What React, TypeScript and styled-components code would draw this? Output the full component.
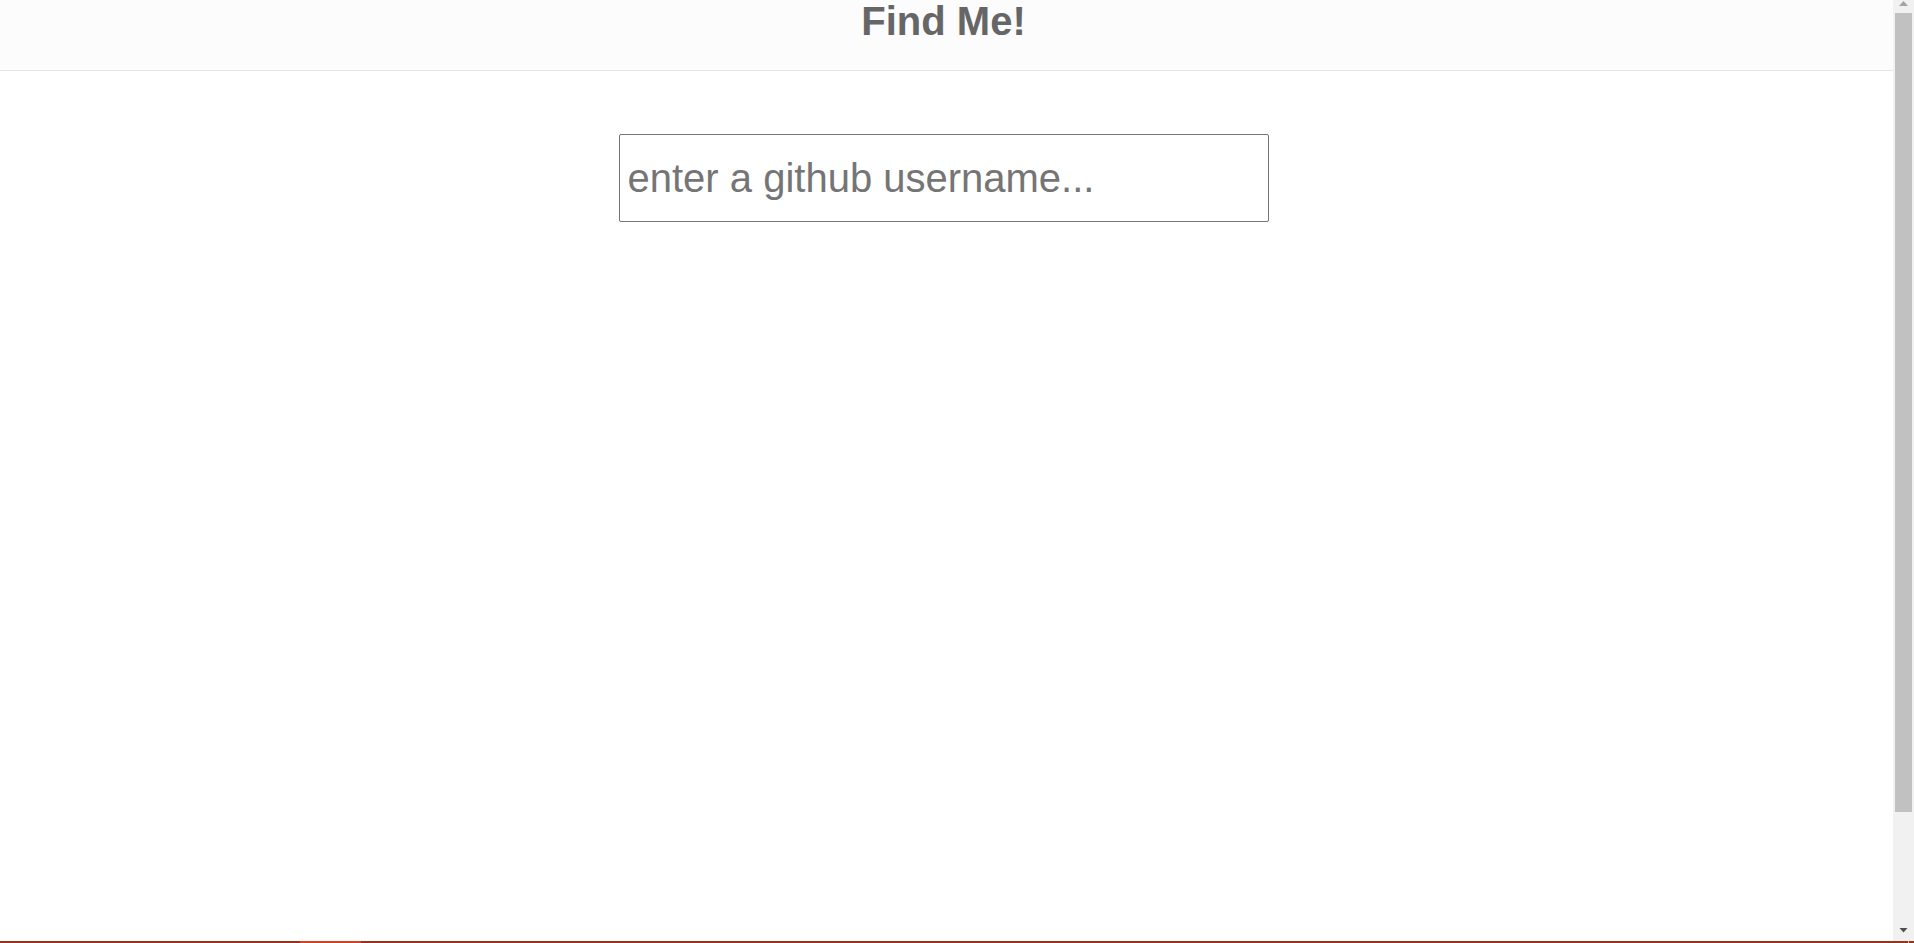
import React from "react";
import styled, { createGlobalStyle } from "styled-components";

const GlobalStyle = createGlobalStyle`
  html, body {
    margin: 0;
    padding: 0;
    height: 100%;
    overflow: hidden;
    background: #ffffff;
    font-family: "Liberation Sans", Arial, sans-serif;
  }
  #root {
    height: 100%;
  }
`;

const Frame = styled.div`
  display: flex;
  flex-direction: column;
  height: 100vh;
`;

const Window = styled.div`
  flex: 1;
  min-height: 0;
  display: flex;
  flex-direction: row;
`;

const Viewport = styled.div`
  flex: 1;
  min-width: 0;
  overflow: hidden;
  background: #ffffff;
`;

const Page = styled.div`
  min-height: 1078px;
  padding-right: 6px;
  display: flex;
  flex-direction: column;
`;

const Header = styled.header`
  height: 70px;
  background: #fcfcfc;
  border-bottom: 1px solid #e5e5e5;
  display: flex;
  justify-content: center;
  align-items: flex-start;
  margin-right: -6px;
  padding-right: 6px;
`;

const Title = styled.h1`
  margin: 0;
  font-family: "Liberation Sans", Arial, sans-serif;
  font-size: 40px;
  font-weight: 700;
  line-height: 42px;
  color: #666666;
`;

const Main = styled.main`
  display: flex;
  justify-content: center;
  padding-top: 63px;
`;

const SearchInput = styled.input`
  box-sizing: border-box;
  width: 650px;
  height: 88px;
  margin: 0;
  padding: 0 8px;
  border: 1px solid #767676;
  border-radius: 2px;
  background: #ffffff;
  font-family: "Liberation Sans", Arial, sans-serif;
  font-size: 40px;
  color: #333333;
  outline: none;

  &::placeholder {
    color: #757575;
    opacity: 1;
  }
`;

const ScrollRail = styled.div`
  flex: 0 0 21px;
  width: 21px;
  background: #f1f1f1;
  display: flex;
  flex-direction: column;
`;

const ScrollButton = styled.div`
  flex: 0 0 13px;
  height: 13px;
  display: flex;
  justify-content: center;
`;

const ScrollThumb = styled.div<{ $h: number }>`
  flex: 0 0 ${(p) => p.$h}px;
  margin: 0 2px;
  background: #c1c1c1;
`;

const ScrollSpace = styled.div`
  flex: 1 1 auto;
`;

const Taskbar = styled.div`
  flex: 0 0 2px;
  height: 2px;
  display: flex;
  background: #97321c;
`;

const TaskSegment = styled.div<{ $w: number; $active?: boolean; $grow?: boolean }>`
  flex: ${(p) => (p.$grow ? "1 1 auto" : `0 0 ${p.$w}px`)};
  background: ${(p) => (p.$active ? "#cf4426" : "#97321c")};
`;

const TaskTick = styled.div`
  flex: 0 0 1px;
  background: #d9b3a8;
`;

function ArrowUp() {
  return (
    <svg width="21" height="13" viewBox="0 0 21 13">
      <polygon points="10.5,1 15,6 6,6" fill="#a3a3a3" />
    </svg>
  );
}

function ArrowDown() {
  return (
    <svg width="21" height="13" viewBox="0 0 21 13">
      <polygon points="6.5,0 14.5,0 10.5,4.5" fill="#505050" />
    </svg>
  );
}

export default function App() {
  return (
    <>
      <GlobalStyle />
      <Frame>
        <Window>
          <Viewport>
            <Page>
              <Header>
                <Title>Find Me!</Title>
              </Header>
              <Main>
                <SearchInput type="text" placeholder="enter a github username..." />
              </Main>
            </Page>
          </Viewport>
          <ScrollRail>
            <ScrollButton>
              <ArrowUp />
            </ScrollButton>
            <ScrollThumb $h={799} />
            <ScrollSpace />
            <ScrollButton>
              <ArrowDown />
            </ScrollButton>
          </ScrollRail>
        </Window>
        <Taskbar>
          <TaskSegment $w={300} />
          <TaskSegment $w={61} $active />
          <TaskSegment $w={0} $grow />
          <TaskTick />
          <TaskSegment $w={5} />
        </Taskbar>
      </Frame>
    </>
  );
}
